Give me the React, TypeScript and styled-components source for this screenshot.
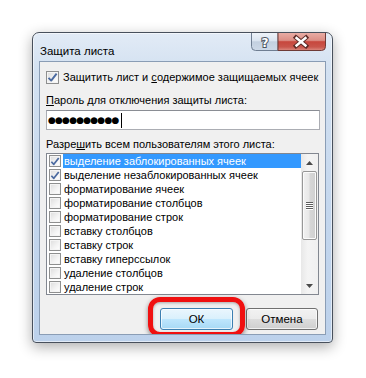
import React from "react";
import styled, { createGlobalStyle } from "styled-components";

const Global = createGlobalStyle`
  html, body { margin: 0; padding: 0; background: #ffffff; }
  body { font-family: "Liberation Sans", Arial, sans-serif; }
`;

const Page = styled.div`
  padding: 32px 0 0 32px;
  width: 366px;
  height: 378px;
  box-sizing: border-box;
`;

const Dialog = styled.div`
  width: 301px;
  height: 311px;
  box-sizing: border-box;
  border: 1px solid #48505c;
  border-radius: 7px 7px 4px 4px;
  background: linear-gradient(to bottom, #e2ebf6 0%, #d3e1f1 12%, #c3d6ed 60%, #bcd1eb 100%);
  box-shadow: 0 4px 14px rgba(0, 0, 0, 0.32), inset 0 0 0 1px rgba(255, 255, 255, 0.55);
  padding: 0 6px 7px 6px;
  display: flex;
  flex-direction: column;
`;

const TitleBar = styled.div`
  flex: none;
  height: 28px;
  display: flex;
  align-items: flex-start;
  justify-content: space-between;
`;

const Title = styled.div`
  padding: 10px 0 0 1px;
  font-size: 11.5px;
  line-height: 16px;
  color: #000;
  white-space: nowrap;
`;

const ControlsSvg = styled.svg`
  display: block;
  flex: none;
  width: 75px;
  height: 18px;
`;

const Panel = styled.div`
  flex: 1;
  min-height: 0;
  overflow: hidden;
  border: 1px solid #8a9db5;
  background: #f0f0f0;
  padding: 0 5px 0 6px;
  display: flex;
  flex-direction: column;
  font-size: 11px;
  color: #000;
`;

const CheckRow = styled.label`
  margin-top: 7px;
  display: flex;
  align-items: center;
  gap: 4px;
  height: 16px;
  line-height: 16px;
  white-space: nowrap;
`;

const Box = styled.span<{ $small?: boolean }>`
  box-sizing: border-box;
  width: ${(p) => (p.$small ? "12px" : "13px")};
  height: ${(p) => (p.$small ? "12px" : "13px")};
  flex: none;
  border: 1px solid #8e8f8f;
  background: linear-gradient(135deg, #dcdcdc 0%, #f4f4f4 60%, #ffffff 100%);
  box-shadow: inset 0 0 0 1px #f4f4f4;
  display: flex;
  align-items: center;
  justify-content: center;
`;

const Label = styled.div<{ $top: number }>`
  margin-top: ${(p) => p.$top}px;
  height: 16px;
  line-height: 16px;
  white-space: nowrap;
`;

const U = styled.span`
  text-decoration: underline;
`;

const Input = styled.div`
  flex: none;
  margin-top: 2px;
  box-sizing: border-box;
  height: 20px;
  width: 274px;
  border: 1px solid #abadb3;
  border-top-color: #8a8d94;
  background: #fff;
  display: flex;
  align-items: center;
  padding-left: 1px;
`;

const Dots = styled.span`
  font-family: "DejaVu Sans", sans-serif;
  font-size: 9px;
  letter-spacing: -0.8px;
  line-height: 1;
`;

const Caret = styled.span`
  width: 1px;
  height: 15px;
  background: #000;
  margin-left: 2px;
`;

const List = styled.div`
  flex: none;
  margin-top: 1px;
  box-sizing: border-box;
  width: 273px;
  height: 142px;
  border: 1px solid #828790;
  background: #fff;
  display: flex;
`;

const Rows = styled.div`
  flex: 1;
  min-width: 0;
  display: flex;
  flex-direction: column;
`;

const Row = styled.div`
  height: 14px;
  display: flex;
  align-items: center;
  padding-left: 2px;
`;

const RowText = styled.span<{ $sel?: boolean }>`
  flex: 1;
  margin-left: 2px;
  height: 14px;
  line-height: 14px;
  padding-left: 1px;
  white-space: nowrap;
  overflow: hidden;
  background: ${(p) => (p.$sel ? "#3399ff" : "transparent")};
  color: ${(p) => (p.$sel ? "#fff" : "#000")};
`;

const Scroll = styled.div`
  flex: none;
  width: 17px;
  background: linear-gradient(to right, #e8e8e8, #f4f4f4 40%, #f0f0f0);
  display: flex;
  flex-direction: column;
  align-items: center;
`;

const Arrow = styled.div`
  height: 17px;
  width: 17px;
  display: flex;
  align-items: center;
  justify-content: center;
`;

const Thumb = styled.div`
  box-sizing: border-box;
  width: 15px;
  height: 69px;
  border: 1px solid #979797;
  border-radius: 2px;
  background: linear-gradient(to right, #f1f1f1 0%, #e8e8e8 45%, #d6d6d6 55%, #d0d0d0 100%);
  box-shadow: inset 0 0 0 1px #fbfbfb;
  display: flex;
  flex-direction: column;
  align-items: center;
  justify-content: center;
  gap: 1px;
`;

const Grip = styled.span`
  width: 7px;
  height: 1px;
  background: #5d5d5d;
  box-shadow: 0 1px 0 #ffffff;
`;

const Spacer = styled.div`
  flex: 1;
`;

const Buttons = styled.div`
  flex: none;
  margin-top: 13px;
  display: flex;
  justify-content: flex-end;
  gap: 13px;
  padding-right: 2px;
`;

const BtnWrap = styled.div`
  position: relative;
`;

const Btn = styled.div<{ $def?: boolean; $w: number }>`
  box-sizing: border-box;
  width: ${(p) => p.$w}px;
  height: 22px;
  border: 1px solid ${(p) => (p.$def ? "#3c7fb1" : "#707070")};
  border-radius: 3px;
  background: ${(p) =>
    p.$def
      ? "linear-gradient(to bottom, #eaf6fd 0%, #d9f0fc 50%, #bee6fd 51%, #a7d9f5 100%)"
      : "linear-gradient(to bottom, #f2f2f2 0%, #ebebeb 50%, #dddddd 51%, #cfcfcf 100%)"};
  box-shadow: inset 0 0 0 1px rgba(255, 255, 255, 0.7);
  display: flex;
  align-items: center;
  justify-content: center;
  font-size: 11.5px;
`;

const Ring = styled.div`
  position: absolute;
  top: -11px;
  left: -12px;
  right: -12px;
  bottom: -7px;
  border: 5px solid #f01010;
  border-radius: 12px;
  box-shadow: 0 2px 5px rgba(0, 0, 0, 0.45), inset 0 1px 3px rgba(0, 0, 0, 0.3);
  pointer-events: none;
`;

const Check = () => (
  <svg width="11" height="11" viewBox="0 0 11 11">
    <path d="M1.5 5.8 L4.2 8.6 L9.6 1.6" fill="none" stroke="#4b6aa0" strokeWidth="1.9" strokeLinejoin="round" />
  </svg>
);

const Tri = ({ down }: { down?: boolean }) => (
  <svg width="7" height="4" viewBox="0 0 7 4">
    <path d={down ? "M0 0 L7 0 L3.5 4 Z" : "M0 4 L7 4 L3.5 0 Z"} fill="#4a4a4a" />
  </svg>
);

const WindowControls = () => (
  <ControlsSvg viewBox="0 0 75 18">
    <defs>
      <linearGradient id="helpG" x1="0" y1="0" x2="0" y2="1">
        <stop offset="0" stopColor="#eef3f9" />
        <stop offset="0.45" stopColor="#dae4f0" />
        <stop offset="0.5" stopColor="#c3d0e0" />
        <stop offset="1" stopColor="#cdd9e8" />
      </linearGradient>
      <linearGradient id="closeG" x1="0" y1="0" x2="0" y2="1">
        <stop offset="0" stopColor="#e9aca4" />
        <stop offset="0.42" stopColor="#dc8f86" />
        <stop offset="0.5" stopColor="#c7473d" />
        <stop offset="0.8" stopColor="#c9564c" />
        <stop offset="1" stopColor="#dd8d83" />
      </linearGradient>
    </defs>
    <path d="M0.5 0 V13.5 Q0.5 17.5 4.5 17.5 H27 V0" fill="url(#helpG)" stroke="#6f7e92" />
    <path d="M27 0 V17.5 H70.5 Q74.5 17.5 74.5 13.5 V0" fill="url(#closeG)" stroke="#6e3a36" />
    <text
      x="14"
      y="13.5"
      textAnchor="middle"
      fontFamily="DejaVu Sans, sans-serif"
      fontWeight="bold"
      fontSize="12"
      fill="#ffffff"
      stroke="#4d5562"
      strokeWidth="2"
      paintOrder="stroke"
    >
      ?
    </text>
    <path d="M45 4.5 L55 13 M55 4.5 L45 13" stroke="#5a2a26" strokeWidth="4.4" strokeLinecap="square" />
    <path d="M45.5 5 L54.5 12.5 M54.5 5 L45.5 12.5" stroke="#ffffff" strokeWidth="2.4" strokeLinecap="square" />
  </ControlsSvg>
);

const items = [
  { t: "выделение заблокированных ячеек", c: true, s: true },
  { t: "выделение незаблокированных ячеек", c: true },
  { t: "форматирование ячеек" },
  { t: "форматирование столбцов" },
  { t: "форматирование строк" },
  { t: "вставку столбцов" },
  { t: "вставку строк" },
  { t: "вставку гиперссылок" },
  { t: "удаление столбцов" },
  { t: "удаление строк" },
];

export default function App() {
  return (
    <Page>
      <Global />
      <Dialog>
        <TitleBar>
          <Title>Защита листа</Title>
          <WindowControls />
        </TitleBar>
        <Panel>
          <CheckRow>
            <Box>
              <Check />
            </Box>
            <span>
              Защитить лист и <U>с</U>одержимое защищаемых ячеек
            </span>
          </CheckRow>
          <Label $top={7}>
            <U>П</U>ароль для отключения защиты листа:
          </Label>
          <Input>
            <Dots>●●●●●●●●●●</Dots>
            <Caret />
          </Input>
          <Label $top={6}>
            Разре<U>ш</U>ить всем пользователям этого листа:
          </Label>
          <List>
            <Rows>
              {items.map((it) => (
                <Row key={it.t}>
                  <Box $small>{it.c ? <Check /> : null}</Box>
                  <RowText $sel={it.s}>{it.t}</RowText>
                </Row>
              ))}
            </Rows>
            <Scroll>
              <Arrow>
                <Tri />
              </Arrow>
              <Thumb>
                <Grip />
                <Grip />
                <Grip />
                <Grip />
              </Thumb>
              <Spacer />
              <Arrow>
                <Tri down />
              </Arrow>
            </Scroll>
          </List>
          <Buttons>
            <BtnWrap>
              <Btn $def $w={73}>ОК</Btn>
              <Ring />
            </BtnWrap>
            <Btn $w={72}>Отмена</Btn>
          </Buttons>
        </Panel>
      </Dialog>
    </Page>
  );
}
